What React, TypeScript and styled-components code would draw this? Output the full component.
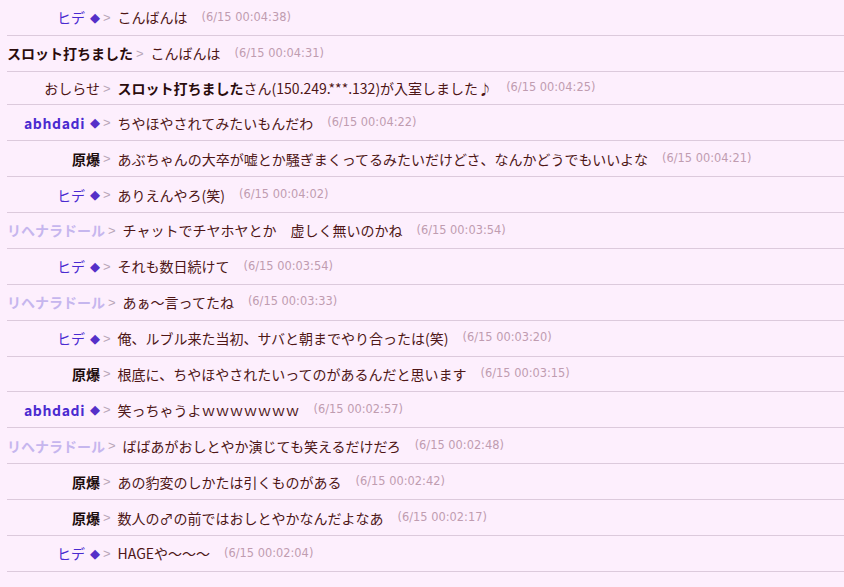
import React from "react";
import styled, { createGlobalStyle } from "styled-components";

const Global = createGlobalStyle`
  html, body { margin: 0; padding: 0; background: #fdeffd; }
  body { font-family: "Noto Sans CJK JP", "Noto Sans", sans-serif; }
`;

const Log = styled.div`
  display: flex;
  flex-direction: column;
  padding-left: 7px;
`;

const Row = styled.div<{ $short?: boolean }>`
  display: flex;
  align-items: center;
  box-sizing: border-box;
  height: ${(p) => (p.$short ? "33.5px" : "35.9px")};
  border-bottom: 1px solid #dccadc;
  white-space: nowrap;
  font-size: 14px;
  line-height: 1;
  color: #4e1616;
`;

type Kind = "member" | "boss" | "guest" | "system" | "entered";

const nameColor: Record<Kind, string> = {
  member: "#4a2ad0",
  boss: "#1c0c0c",
  guest: "#c6b6ee",
  system: "#4e1616",
  entered: "#2a0c0c",
};

const Name = styled.span<{ $kind: Kind; $bold?: boolean; $wide?: boolean }>`
  display: inline-flex;
  align-items: center;
  justify-content: flex-end;
  min-width: 93px;
  color: ${(p) => nameColor[p.$kind]};
  font-weight: ${(p) => (p.$bold ? 700 : 400)};
  letter-spacing: ${(p) => (p.$wide ? "0.6px" : "0")};
`;

const Diamond = styled.span`
  margin-left: 5px;
  font-size: 13px;
  color: #5530c8;
  font-family: "DejaVu Sans", sans-serif;
  font-weight: 400;
  letter-spacing: 0;
`;

const Sep = styled.span`
  margin: 0 7px 0 3px;
  font-family: "Liberation Sans", sans-serif;
  font-size: 13px;
  color: #b8a6b8;
`;

const Msg = styled.span``;

const Strong = styled.b`
  font-weight: 700;
  color: #2a0c0c;
`;

const Time = styled.span`
  margin-left: 14px;
  font-family: "DejaVu Sans", sans-serif;
  font-size: 11.4px;
  color: #c09cb0;
`;

type Entry = {
  name: string;
  kind: Kind;
  bold?: boolean;
  trip?: boolean;
  wide?: boolean;
  msg: React.ReactNode;
  time: string;
  short?: boolean;
};

const entries: Entry[] = [
  { name: "ヒデ", kind: "member", trip: true, msg: "こんばんは", time: "00:04:38" },
  { name: "スロット打ちました", kind: "entered", bold: true, msg: "こんばんは", time: "00:04:31" },
  {
    name: "おしらせ",
    kind: "system",
    short: true,
    msg: (
      <>
        <Strong>スロット打ちました</Strong>さん(150.249.***.132)が入室しました♪
      </>
    ),
    time: "00:04:25",
  },
  { name: "abhdadi", kind: "member", bold: true, trip: true, wide: true, msg: "ちやほやされてみたいもんだわ", time: "00:04:22" },
  { name: "原爆", kind: "boss", bold: true, msg: "あぶちゃんの大卒が嘘とか騒ぎまくってるみたいだけどさ、なんかどうでもいいよな", time: "00:04:21" },
  { name: "ヒデ", kind: "member", trip: true, msg: "ありえんやろ(笑)", time: "00:04:02" },
  { name: "リヘナラドール", kind: "guest", bold: true, msg: "チャットでチヤホヤとか　虚しく無いのかね", time: "00:03:54" },
  { name: "ヒデ", kind: "member", trip: true, msg: "それも数日続けて", time: "00:03:54" },
  { name: "リヘナラドール", kind: "guest", bold: true, msg: "あぁ～言ってたね", time: "00:03:33" },
  { name: "ヒデ", kind: "member", trip: true, msg: "俺、ルブル来た当初、サバと朝までやり合ったは(笑)", time: "00:03:20" },
  { name: "原爆", kind: "boss", bold: true, msg: "根底に、ちやほやされたいってのがあるんだと思います", time: "00:03:15" },
  { name: "abhdadi", kind: "member", bold: true, trip: true, wide: true, msg: "笑っちゃうよｗｗｗｗｗｗｗ", time: "00:02:57" },
  { name: "リヘナラドール", kind: "guest", bold: true, msg: "ばばあがおしとやか演じても笑えるだけだろ", time: "00:02:48" },
  { name: "原爆", kind: "boss", bold: true, msg: "あの豹変のしかたは引くものがある", time: "00:02:42" },
  { name: "原爆", kind: "boss", bold: true, msg: "数人の♂の前ではおしとやかなんだよなあ", time: "00:02:17" },
  { name: "ヒデ", kind: "member", trip: true, msg: "HAGEや～～～", time: "00:02:04" },
];

export default function App() {
  return (
    <>
      <Global />
      <Log>
        {entries.map((e, i) => (
          <Row key={i} $short={e.short}>
            <Name $kind={e.kind} $bold={e.bold} $wide={e.wide}>
              {e.name}
              {e.trip && <Diamond>◆</Diamond>}
            </Name>
            <Sep>&gt;</Sep>
            <Msg>{e.msg}</Msg>
            <Time>(6/15 {e.time})</Time>
          </Row>
        ))}
      </Log>
    </>
  );
}
